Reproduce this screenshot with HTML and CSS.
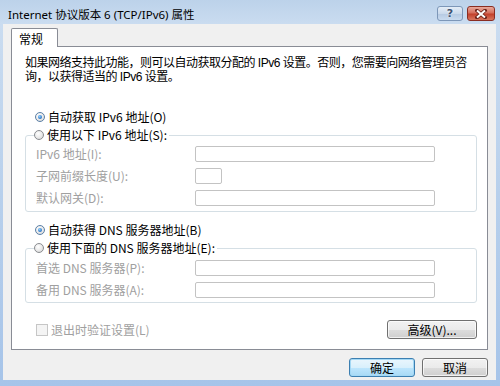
FILE: index.html
```html
<!DOCTYPE html>
<html lang="zh-CN">
<head>
    <meta charset="UTF-8">
    <meta name="viewport" content="width=device-width, initial-scale=1.0">
    <title>Internet 协议版本 6 (TCP/IPv6) 属性</title>
    <link rel="stylesheet" href="styles.css">
</head>
<body>
    <div class="window">
        <div class="titlebar">
            <span class="title">Internet 协议版本 6 (TCP/IPv6) 属性</span>
            <div class="caption-buttons">
                <span class="cap-btn help">?</span>
                <span class="cap-btn close">
                    <svg width="12" height="10" viewBox="0 0 12 10">
                        <path d="M2 1.5 L10 8.5 M10 1.5 L2 8.5" stroke="#6b2219" stroke-width="3.6" stroke-linecap="square"/>
                        <path d="M2 1.5 L10 8.5 M10 1.5 L2 8.5" stroke="#ffffff" stroke-width="2"/>
                    </svg>
                </span>
            </div>
        </div>

        <div class="client">
            <div class="tabs">
                <span class="tab active">常规</span>
            </div>

            <div class="panel">
                <p class="intro">如果网络支持此功能，则可以自动获取分配的 IPv6 设置。否则，您需要向网络管理员咨<br>询，以获得适当的 IPv6 设置。</p>

                <label class="radio first"><span class="dot checked"></span>自动获取 IPv6 地址(O)</label>
                <fieldset class="group">
                    <legend><label class="radio"><span class="dot"></span>使用以下 IPv6 地址(S):</label></legend>
                    <div class="rows">
                        <span class="field-label">IPv6 地址(I):</span>
                        <span class="input"></span>
                        <span class="field-label">子网前缀长度(U):</span>
                        <span class="input short"></span>
                        <span class="field-label">默认网关(D):</span>
                        <span class="input"></span>
                    </div>
                </fieldset>

                <label class="radio second"><span class="dot checked"></span>自动获得 DNS 服务器地址(B)</label>
                <fieldset class="group dns">
                    <legend><label class="radio"><span class="dot"></span>使用下面的 DNS 服务器地址(E):</label></legend>
                    <div class="rows">
                        <span class="field-label">首选 DNS 服务器(P):</span>
                        <span class="input"></span>
                        <span class="field-label">备用 DNS 服务器(A):</span>
                        <span class="input"></span>
                    </div>
                </fieldset>

                <div class="bottom-row">
                    <label class="checkbox"><span class="box"></span>退出时验证设置(L)</label>
                    <button class="btn advanced">高级(V)...</button>
                </div>
            </div>

            <div class="footer">
                <button class="btn default">确定</button>
                <button class="btn">取消</button>
            </div>
        </div>
    </div>
</body>
</html>
```

FILE: styles.css
```css
body {
    margin: 0;
    width: 500px;
    height: 386px;
    overflow: hidden;
    font-family: "Noto Sans CJK SC", "Noto Sans", sans-serif;
    font-size: 12px;
    color: #000;
}
.window {
    height: 386px;
    display: flex;
    flex-direction: column;
    background: linear-gradient(to bottom, #bcd2ea 0, #cadcf0 24px, #b8d0ec 50%, #a6c4e9 100%);
}

/* title bar */
.titlebar {
    height: 24px;
    flex-shrink: 0;
    display: flex;
    justify-content: space-between;
    align-items: flex-start;
    padding: 0 5px 0 8px;
}
.title {
    margin-top: 7px;
    line-height: 15px;
    font-family: "Noto Sans", "Noto Sans CJK SC", sans-serif;
    font-size: 11.5px;
}
.caption-buttons {
    display: flex;
    gap: 4px;
    margin-top: 6px;
}
.cap-btn {
    height: 15px;
    box-sizing: border-box;
    border-radius: 3px;
    display: flex;
    align-items: center;
    justify-content: center;
}
.help {
    width: 26px;
    border: 1px solid #7d97b8;
    background: linear-gradient(to bottom, #e4edf7 0, #cbdaec 50%, #b5c9e2 51%, #c9dbef 100%);
    color: #3d5272;
    font-family: "DejaVu Sans", sans-serif;
    font-weight: bold;
    font-size: 11px;
    line-height: 13px;
    text-shadow: 0 0 2px #fff;
}
.close {
    width: 28px;
    border: 1px solid #8a2d22;
    background: linear-gradient(to bottom, #e8a99c 0, #d56e5c 45%, #c2402b 55%, #d8765f 100%);
}

/* client area */
.client {
    flex: 1;
    display: flex;
    flex-direction: column;
    margin: 0 4px 6px 3px;
    padding: 4px 8px 0;
    background: #f0f0f0;
}
.tabs {
    display: flex;
    height: 19px;
    margin-bottom: -1px;
    position: relative;
    z-index: 1;
}
.tab {
    width: 47px;
    box-sizing: border-box;
    padding-left: 7px;
    line-height: 19px;
    border: 1px solid #898c95;
    border-bottom: none;
    border-radius: 2px 2px 0 0;
    background: #fff;
}
.panel {
    flex: 1;
    display: flex;
    flex-direction: column;
    border: 1px solid #898c95;
    background: #fff;
    padding: 9px 10px 10px 13px;
}
.intro {
    margin: 0 -3px 0 0;
    font-family: "Liberation Sans", "Noto Sans CJK SC", sans-serif;
    line-height: 14px;
    letter-spacing: -0.5px;
    white-space: nowrap;
}

/* radios */
.radio {
    display: flex;
    align-items: center;
    height: 16px;
    line-height: 16px;
    white-space: nowrap;
}
.radio.first {
    margin-top: 25px;
    padding-left: 10px;
}
.radio.second {
    margin-top: 10px;
    padding-left: 10px;
}
.dot {
    width: 10px;
    height: 10px;
    box-sizing: border-box;
    border: 1px solid #8a8c90;
    border-radius: 50%;
    background: radial-gradient(circle at 40% 35%, #ffffff 0, #e8e8e8 55%, #cfcfcf 100%);
    margin-right: 3px;
    display: flex;
    align-items: center;
    justify-content: center;
}
.dot.checked {
    border-color: #5a7fa6;
}
.dot.checked::after {
    content: "";
    width: 4px;
    height: 4px;
    border-radius: 50%;
    background: radial-gradient(circle at 40% 35%, #8fd0ff 0, #2a74c6 70%, #1b4f93 100%);
}

/* group boxes */
.group {
    margin: 2px 0 0;
    padding: 3px 0 5px 10px;
    border: 1px solid #d5dfe5;
    border-radius: 3px;
}
.group.dns {
    padding-top: 4px;
    padding-bottom: 4px;
}
.group legend {
    padding: 0 2px 0 0;
    margin-left: -2px;
}
.rows {
    display: grid;
    grid-template-columns: 159px auto;
    row-gap: 6px;
    align-items: center;
}
.field-label {
    color: #a0a0a0;
    line-height: 16px;
    white-space: nowrap;
}
.input {
    display: block;
    width: 240px;
    height: 16px;
    box-sizing: border-box;
    border: 1px solid #c3c3c3;
    border-radius: 2px;
    background: #fff;
}
.input.short {
    width: 27px;
}

/* checkbox + advanced */
.bottom-row {
    margin-top: auto;
    display: flex;
    justify-content: space-between;
    align-items: center;
    height: 19px;
}
.checkbox {
    display: flex;
    align-items: center;
    padding-left: 11px;
    color: #a0a0a0;
}
.box {
    width: 12px;
    height: 12px;
    box-sizing: border-box;
    border: 1px solid #c6c6c6;
    background: #f4f4f4;
    margin-right: 3px;
}

/* buttons */
.btn {
    height: 19px;
    box-sizing: border-box;
    padding: 0;
    font-family: "Noto Sans CJK SC", "Noto Sans", sans-serif;
    font-size: 12px;
    line-height: 17px;
    color: #000;
    border: 1px solid #707070;
    border-radius: 3px;
    background: linear-gradient(to bottom, #f2f2f2 0, #ebebeb 50%, #dddddd 51%, #cfcfcf 100%);
    box-shadow: inset 0 0 0 1px rgba(255, 255, 255, 0.7);
}
.advanced {
    width: 90px;
}
.footer {
    height: 30px;
    flex-shrink: 0;
    display: flex;
    justify-content: flex-end;
    align-items: flex-start;
    gap: 7px;
    padding-top: 8px;
    box-sizing: border-box;
}
.footer .btn {
    width: 66px;
}
.btn.default {
    border-color: #3c7fb1;
    background: linear-gradient(to bottom, #eaf6fd 0, #d9f0fc 50%, #bee6fd 51%, #a7d9f5 100%);
    box-shadow: inset 0 0 0 1px #a3d8f5;
}
```
